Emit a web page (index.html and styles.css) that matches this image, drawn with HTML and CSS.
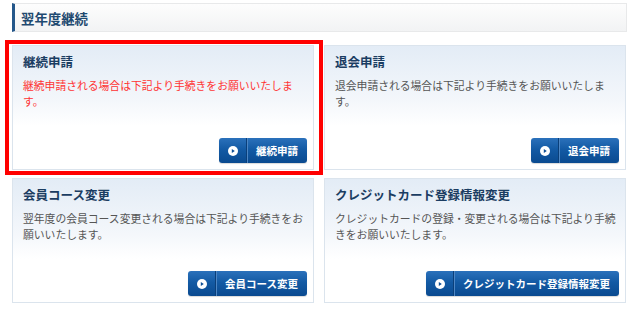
FILE: index.html
```html
<!DOCTYPE html>
<html lang="ja">

<head>
    <meta charset="UTF-8">
    <meta name="viewport" content="width=device-width, initial-scale=1.0">
    <title>翌年度継続</title>
    <link rel="stylesheet" href="styles.css">
</head>

<body>
    <div class="wrap">
        <h2 class="section-title">翌年度継続</h2>

        <div class="menu">
            <div class="card highlight">
                <h3>継続申請</h3>
                <p class="note red">継続申請される場合は下記より手続きをお願いいたします。</p>
                <a class="btn" href="#">
                    <span class="btn-icon"><svg width="10" height="10" viewBox="0 0 10 10"><circle cx="5" cy="5" r="5" fill="#fff"/><path d="M3.8 2.9 L6.8 5 L3.8 7.1 Z" fill="#0e4f96"/></svg></span>
                    <span class="btn-label">継続申請</span>
                </a>
            </div>

            <div class="card">
                <h3>退会申請</h3>
                <p class="note">退会申請される場合は下記より手続きをお願いいたします。</p>
                <a class="btn" href="#">
                    <span class="btn-icon"><svg width="10" height="10" viewBox="0 0 10 10"><circle cx="5" cy="5" r="5" fill="#fff"/><path d="M3.8 2.9 L6.8 5 L3.8 7.1 Z" fill="#0e4f96"/></svg></span>
                    <span class="btn-label">退会申請</span>
                </a>
            </div>

            <div class="card">
                <h3>会員コース変更</h3>
                <p class="note">翌年度の会員コース変更される場合は下記より手続きをお願いいたします。</p>
                <a class="btn" href="#">
                    <span class="btn-icon"><svg width="10" height="10" viewBox="0 0 10 10"><circle cx="5" cy="5" r="5" fill="#fff"/><path d="M3.8 2.9 L6.8 5 L3.8 7.1 Z" fill="#0e4f96"/></svg></span>
                    <span class="btn-label">会員コース変更</span>
                </a>
            </div>

            <div class="card">
                <h3>クレジットカード登録情報変更</h3>
                <p class="note">クレジットカードの登録・変更される場合は下記より手続きをお願いいたします。</p>
                <a class="btn" href="#">
                    <span class="btn-icon"><svg width="10" height="10" viewBox="0 0 10 10"><circle cx="5" cy="5" r="5" fill="#fff"/><path d="M3.8 2.9 L6.8 5 L3.8 7.1 Z" fill="#0e4f96"/></svg></span>
                    <span class="btn-label">クレジットカード登録情報変更</span>
                </a>
            </div>
        </div>
    </div>
</body>

</html>
```

FILE: styles.css
```css
body {
    margin: 0;
    padding: 0;
    background-color: #fff;
    font-family: "Noto Sans CJK JP", "Noto Sans", sans-serif;
}

.wrap {
    width: 615px;
    padding: 3px 13px 0 12px;
}

/* section heading bar */
.section-title {
    margin: 0;
    height: 29px;
    box-sizing: border-box;
    display: flex;
    align-items: center;
    padding-left: 6px;
    font-size: 13.4px;
    font-weight: bold;
    color: #1f4a70;
    background: linear-gradient(#fdfdfd, #f2f3f4);
    border: 1px solid #e8e9ea;
    border-left: 3px solid #24578a;
}

.menu {
    display: grid;
    grid-template-columns: 1fr 1fr;
    column-gap: 10px;
    row-gap: 8px;
    margin-top: 13px;
    width: 614px;
}

.card {
    position: relative;
    height: 125px;
    box-sizing: border-box;
    display: flex;
    flex-direction: column;
    padding: 8px 6px 6px 10px;
    border: 1px solid #dbe4ed;
    background: linear-gradient(#e3ecf6 0%, #f4f7fb 45%, #fff 65%);
}

/* red frame drawn over the selected card */
.highlight::after {
    content: "";
    position: absolute;
    top: -6px;
    left: -8px;
    right: -10px;
    bottom: -6px;
    border: 4px solid #f00;
}

.card h3 {
    margin: 0;
    font-size: 12.5px;
    line-height: 16px;
    font-weight: bold;
    color: #1b3d62;
}

.note {
    margin: 7px 0 0;
    font-size: 10.8px;
    line-height: 16px;
    color: #555;
}

.note.red {
    color: #f33;
}

.btn {
    margin-top: auto;
    align-self: flex-end;
    display: flex;
    align-items: stretch;
    height: 25px;
    border-radius: 3px;
    text-decoration: none;
    color: #fff;
    background: linear-gradient(#2b71bb 0%, #135aa4 45%, #0a4a90 100%);
    box-shadow: 0 1px 1px rgba(0, 0, 0, 0.15);
}

.btn-icon {
    width: 27px;
    display: flex;
    align-items: center;
    justify-content: center;
    border-right: 1px solid #0a3f7a;
}

.btn-label {
    display: flex;
    align-items: center;
    padding: 0 9px 0 8px;
    font-size: 10.5px;
    font-weight: bold;
    border-left: 1px solid #4d86c4;
}
```
